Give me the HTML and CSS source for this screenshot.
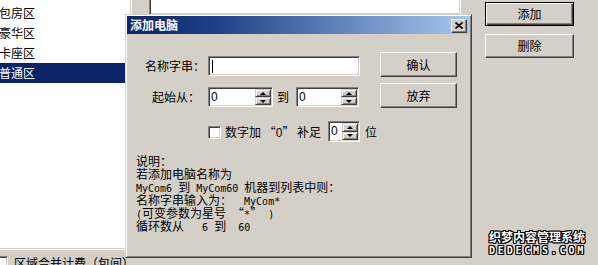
FILE: index.html
```html
<!DOCTYPE html>
<html lang="zh-CN">
<head>
<meta charset="utf-8">
<title>添加电脑</title>
<link rel="stylesheet" href="styles.css">
</head>
<body>
<div class="screen">
  <div class="col-left">
    <ul class="list">
      <li>包房区</li>
      <li>豪华区</li>
      <li>卡座区</li>
      <li class="sel">普通区</li>
    </ul>
    <div class="chkrow"><span class="chk chk-cut"></span><span class="chktxt">区域合并计费（包间）</span></div>
  </div>
  <div class="col-mid"><div class="top-field"></div></div>
  <div class="col-right">
    <button class="btn default">添加</button>
    <button class="btn">删除</button>
  </div>
</div>

<div class="dialog">
  <div class="titlebar">
    <span class="title">添加电脑</span>
    <span class="close"><svg width="8" height="7" viewBox="0 0 8 7"><path d="M0.5 0.5 L7.5 6.5 M7.5 0.5 L0.5 6.5" stroke="#000" stroke-width="1.7" fill="none"/></svg></span>
  </div>
  <div class="dbody">
    <div class="row r1">
      <span class="lbl l1">名称字串：</span>
      <span class="sunken name-field"><span class="caret"></span></span>
      <button class="btn dbtn">确认</button>
    </div>
    <div class="row r2">
      <span class="lbl l2">起始从：</span>
      <span class="sunken spin s1"><span class="val">0</span><span class="arrows"><i class="ab up"></i><i class="ab down"></i></span></span>
      <span class="lbl to">到</span>
      <span class="sunken spin s2"><span class="val">0</span><span class="arrows"><i class="ab up"></i><i class="ab down"></i></span></span>
      <button class="btn dbtn">放弃</button>
    </div>
    <div class="row r3">
      <span class="chk"></span>
      <span class="chklbl">数字加 “<span class="v">0</span>” 补足</span>
      <span class="sunken spin s3"><span class="val">0</span><span class="arrows"><i class="ab up"></i><i class="ab down"></i></span></span>
      <span class="wei">位</span>
    </div>
    <div class="notes">
      <div class="ln">说明：</div>
      <div class="ln">若添加电脑名称为</div>
      <div class="ln"><span class="m">MyCom6 </span>到<span class="m"> MyCom60 </span>机器到列表中则：</div>
      <div class="ln">名称字串输入为：<span class="m">  MyCom*</span></div>
      <div class="ln"><span class="m">(</span>可变参数为星号<span class="m"> </span>“<span class="m">*</span>”<span class="m"> )</span></div>
      <div class="ln">循环数从<span class="m">   6 </span>到<span class="m">  60</span></div>
    </div>
  </div>
</div>

<div class="wm">
  <div class="wm1">织梦内容管理系统</div>
  <div class="wm2">DEDECMS.COM</div>
</div>
</body>
</html>
```
FILE: styles.css
```css
* { box-sizing: border-box; }
html, body { margin: 0; padding: 0; }
body {
  width: 598px;
  height: 265px;
  overflow: hidden;
  position: relative;
  background: #D4D0C8;
  color: #000;
  font: 12px/1 "Noto Sans CJK SC", sans-serif;
}

.screen { display: flex; align-items: flex-start; }

/* left list */
.col-left { width: 132px; flex: none; }
.list {
  list-style: none;
  margin: 0;
  padding: 3px 0 0;
  height: 250px;
  background: #fff;
  border-right: 1px solid #fff;
  border-bottom: 1px solid #fff;
  box-shadow: inset -1px -1px #D4D0C8;
}
.list li { height: 20px; line-height: 20px; margin-left: -1px; margin-right: 1px; white-space: nowrap; }
.list li.sel { background: #0A246A; color: #fff; }

.chkrow { display: flex; align-items: flex-start; margin-top: 6px; white-space: nowrap; }
.chk {
  flex: none;
  width: 13px;
  height: 13px;
  background: #fff;
  border: 1px solid;
  border-color: #808080 #fff #fff #808080;
  box-shadow: inset 1px 1px #404040, inset -1px -1px #D4D0C8;
}
.chk-cut { margin-left: -5px; }
.chktxt { margin-left: 6px; line-height: 14px; }

/* middle */
.col-mid { flex: none; margin-left: 17px; width: 312px; }
.top-field {
  height: 15px;
  background: #fff;
  border-left: 1px solid #808080;
  border-right: 1px solid #fff;
  border-bottom: 1px solid #fff;
  box-shadow: inset 1px 0 #404040, inset -1px -1px #D4D0C8;
}

/* right buttons */
.col-right { flex: none; margin-left: 24px; width: 89px; padding-top: 2px; display: flex; flex-direction: column; gap: 8px; }

.btn {
  font: 12px/1 "Noto Sans CJK SC", sans-serif;
  color: #000;
  background: #D4D0C8;
  border: 1px solid;
  border-color: #fff #404040 #404040 #fff;
  box-shadow: inset -1px -1px #808080;
  padding: 0;
  width: 89px;
  height: 24px;
  display: flex;
  align-items: center;
  justify-content: center;
}
.btn.default {
  border-color: #000;
  box-shadow: inset 1px 1px #fff, inset -1px -1px #404040, inset -2px -2px #808080;
}

/* dialog window */
.dialog {
  position: absolute;
  left: 125px;
  top: 14px;
  width: 347px;
  height: 244px;
  padding: 1px;
  background: #D4D0C8;
  border: 1px solid;
  border-color: #D4D0C8 #404040 #404040 #D4D0C8;
  box-shadow: inset 1px 1px #fff, inset -1px -1px #808080;
}
.titlebar {
  height: 18px;
  display: flex;
  align-items: center;
  padding: 0 3px;
  background: linear-gradient(to right, #0A246A 0%, #1c3f85 25%, #A6CAF0 100%);
}
.title { flex: 1; color: #fff; font-weight: bold; line-height: 18px; }
.close {
  width: 16px;
  height: 14px;
  margin-top: 1px;
  display: flex;
  align-items: center;
  justify-content: center;
  background: #D4D0C8;
  border: 1px solid;
  border-color: #fff #404040 #404040 #fff;
  box-shadow: inset -1px -1px #808080;
}
.close svg { display: block; }

.row { display: flex; align-items: flex-start; }
.lbl { line-height: 20px; margin-top: 4px; white-space: nowrap; }

.sunken {
  background: #fff;
  border: 1px solid;
  border-color: #808080 #fff #fff #808080;
  box-shadow: inset 1px 1px #404040, inset -1px -1px #D4D0C8;
}

.r1 { margin-top: 18px; margin-left: 18px; height: 25px; }
.l1 { width: 63px; }
.name-field { width: 152px; height: 20px; margin-top: 4px; display: flex; align-items: center; padding-left: 3px; }
.caret { width: 1px; height: 13px; background: #000; }
.dbtn { width: 77px; height: 25px; }
.r1 .dbtn { margin-left: 20px; }

.r2 { margin-top: 6px; margin-left: 25px; height: 25px; }
.l2 { width: 56px; }
.to { width: 12px; margin-left: 4px; }
.r2 .dbtn { margin-left: 21px; }

.spin { display: flex; height: 20px; margin-top: 4px; padding: 1px; }
.s1 { width: 65px; }
.s2 { width: 63px; margin-left: 7px; }
.s3 { width: 32px; height: 21px; margin-top: 0; }
.val { flex: 1; font: 12px/16px "Liberation Sans", sans-serif; padding-left: 1px; }
.s3 .val { line-height: 17px; }
.arrows { width: 16px; display: flex; flex-direction: column; }
.ab {
  flex: 1;
  display: flex;
  align-items: center;
  justify-content: center;
  background: #D4D0C8;
  border: 1px solid;
  border-color: #D4D0C8 #404040 #404040 #D4D0C8;
  box-shadow: inset 1px 1px #fff, inset -1px -1px #808080;
}
.ab::before { content: ""; width: 0; height: 0; border-left: 3px solid transparent; border-right: 3px solid transparent; }
.up::before { border-bottom: 3px solid #000; }
.down::before { border-top: 3px solid #000; }

.r3 { margin-top: 13px; margin-left: 81px; height: 21px; }
.r3 .chk { margin-top: 5px; }
.chklbl { width: 103px; margin-left: 4px; line-height: 21px; white-space: pre; }
.v { font-family: "Liberation Sans", sans-serif; }
.wei { margin-left: 5px; line-height: 21px; }

.notes { margin-top: 12px; margin-left: 9px; }
.notes .ln { height: 13px; line-height: 13px; white-space: pre; }
.m { font: 10px/13px "DejaVu Sans Mono", monospace; }

/* watermark overlay */
.wm {
  position: absolute;
  left: 489px;
  top: 229px;
  color: #fff;
  font-weight: bold;
  text-shadow: 1px 0 #000, -1px 0 #000, 0 1px #000, 0 -1px #000, 1px 1px #000, -1px -1px #000, 1px -1px #000, -1px 1px #000;
}
.wm1 { font-size: 12px; line-height: 16px; }
.wm2 { font: bold 10px/12px "DejaVu Sans Mono", monospace; letter-spacing: 2.8px; }
```
